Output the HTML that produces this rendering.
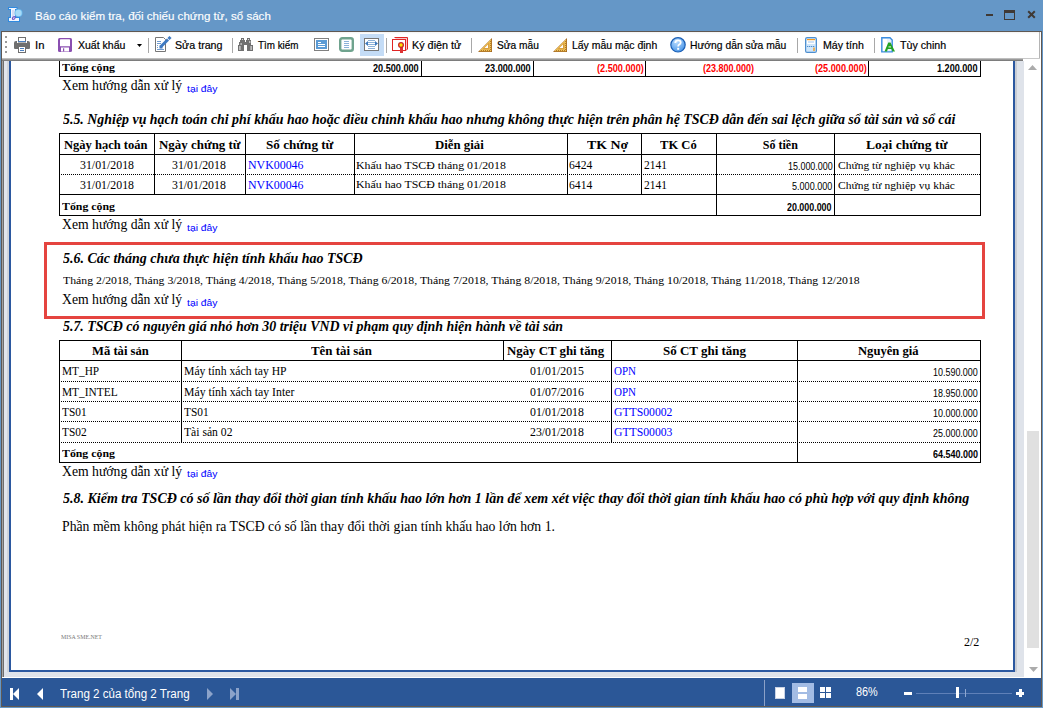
<!DOCTYPE html>
<html><head><meta charset="utf-8">
<style>
*{margin:0;padding:0;box-sizing:border-box}
html,body{width:1043px;height:708px;overflow:hidden;background:#6597c7;position:relative;font-family:"Liberation Sans",sans-serif}
.a{position:absolute}
.t{position:absolute;white-space:nowrap;transform-origin:0 0}
.hl{position:absolute;height:1px;background:#000}
.vl{position:absolute;width:1px;background:#000}
.dl{position:absolute;height:1px;background:repeating-linear-gradient(90deg,#000 0 1px,transparent 1px 2px)}
.sep{position:absolute;width:1px;height:15px;top:38px;background:#a8a8a8}
</style></head><body>
<!-- window frame -->
<div class="a" style="left:1px;top:31px;width:1041px;height:676px;background:#5f5853"></div>
<div class="a" style="left:2px;top:32px;width:1039px;height:674px;background:#fff"></div>
<!-- toolbar -->
<div class="a" style="left:2px;top:32px;width:1038px;height:26px;background:linear-gradient(#f2f2f2 0,#fff 2px,#fff 100%)"></div>
<div class="a" style="left:1039px;top:32px;width:1px;height:27px;background:#b4b4b4"></div>
<div class="a" style="left:2px;top:58px;width:1021px;height:3px;background:linear-gradient(#d0d0d0,#9a9a9a 50%,#6e6e6e)"></div>
<!-- grip dots -->
<div class="a" style="left:5px;top:36px;width:2px;height:2px;background:#999"></div>
<div class="a" style="left:5px;top:41px;width:2px;height:2px;background:#999"></div>
<div class="a" style="left:5px;top:46px;width:2px;height:2px;background:#999"></div>
<div class="a" style="left:5px;top:51px;width:2px;height:2px;background:#999"></div>
<!-- separators -->
<div class="sep" style="left:148px"></div>
<div class="sep" style="left:232px"></div>
<div class="sep" style="left:386px"></div>
<div class="sep" style="left:471px"></div>
<div class="sep" style="left:797px"></div>
<div class="sep" style="left:874px"></div>
<!-- highlighted button -->
<div class="a" style="left:360px;top:34px;width:24px;height:22px;background:#c4dcf6"></div>

<!-- page area -->
<div class="a" style="left:2px;top:61px;width:1px;height:617px;background:#a2a2a2"></div>
<div class="a" style="left:3px;top:61px;width:1px;height:617px;background:#6e6e6e"></div>
<div class="a" style="left:4px;top:61px;width:1020px;height:616px;background:#dfe3ea"></div>
<div class="a" style="left:4px;top:61px;width:3px;height:611px;background:#e2e6ed"></div>
<div class="a" style="left:7px;top:61px;width:2px;height:611px;background:#d0d4da"></div>
<div class="a" style="left:1015px;top:61px;width:2px;height:611px;background:#c9cdd4"></div>
<div class="a" style="left:9px;top:61px;width:1006px;height:611px;background:#2b58a0"></div>
<div class="a" style="left:11px;top:61px;width:1002px;height:609px;background:#fff"></div>
<!-- scrollbar -->
<div class="a" style="left:1024px;top:59px;width:17px;height:619px;background:#fff"></div>
<div class="a" style="left:1023px;top:58px;width:17px;height:1px;background:#c9c9c9"></div>
<div class="a" style="left:1027px;top:431px;width:12px;height:217px;background:#e0e0e0"></div>
<svg class="a" style="left:1028px;top:65px" width="9" height="5"><polygon points="0,5 4.5,0 9,5" fill="#ababab"/></svg>
<svg class="a" style="left:1029px;top:667px" width="9" height="5"><polygon points="0,0 4.5,5 9,0" fill="#ababab"/></svg>
<!-- status bar -->
<div class="a" style="left:2px;top:677px;width:1022px;height:1px;background:#fff"></div>
<div class="a" style="left:2px;top:678px;width:1039px;height:28px;background:#2b5797"></div>
<div class="a" style="left:1px;top:706px;width:1041px;height:1px;background:#5f5853"></div>

<!-- report tables -->
<!-- top table total row -->
<div class="vl" style="left:59px;top:61px;height:16px"></div>
<div class="vl" style="left:421px;top:61px;height:16px"></div>
<div class="vl" style="left:533px;top:61px;height:16px"></div>
<div class="vl" style="left:645px;top:61px;height:16px"></div>
<div class="vl" style="left:868px;top:61px;height:16px"></div>
<div class="vl" style="left:980px;top:61px;height:16px"></div>
<div class="hl" style="left:59px;top:76px;width:922px"></div>

<!-- 5.5 table -->
<div class="hl" style="left:59px;top:133px;width:922px"></div>
<div class="hl" style="left:59px;top:154px;width:922px"></div>
<div class="dl" style="left:59px;top:174px;width:922px"></div>
<div class="hl" style="left:59px;top:194px;width:922px"></div>
<div class="hl" style="left:59px;top:215px;width:922px"></div>
<div class="vl" style="left:59px;top:133px;height:83px"></div>
<div class="vl" style="left:980px;top:133px;height:83px"></div>
<div class="vl" style="left:154px;top:133px;height:62px"></div>
<div class="vl" style="left:245px;top:133px;height:62px"></div>
<div class="vl" style="left:354px;top:133px;height:62px"></div>
<div class="vl" style="left:567px;top:133px;height:62px"></div>
<div class="vl" style="left:641px;top:133px;height:62px"></div>
<div class="vl" style="left:716px;top:133px;height:83px"></div>
<div class="vl" style="left:834px;top:133px;height:83px"></div>

<!-- red box -->
<div class="a" style="left:44px;top:242px;width:941px;height:77px;border:3px solid #e5443f"></div>

<!-- 5.7 table -->
<div class="hl" style="left:59px;top:340px;width:922px"></div>
<div class="hl" style="left:59px;top:360px;width:922px"></div>
<div class="dl" style="left:59px;top:381px;width:922px"></div>
<div class="dl" style="left:59px;top:401px;width:922px"></div>
<div class="dl" style="left:59px;top:421px;width:922px"></div>
<div class="dl" style="left:59px;top:442px;width:922px"></div>
<div class="hl" style="left:59px;top:462px;width:922px"></div>
<div class="vl" style="left:59px;top:340px;height:123px"></div>
<div class="vl" style="left:980px;top:340px;height:123px"></div>
<div class="vl" style="left:181px;top:340px;height:102px"></div>
<div class="vl" style="left:503px;top:340px;height:20px"></div>
<div class="vl" style="left:611px;top:340px;height:102px"></div>
<div class="vl" style="left:797px;top:340px;height:123px"></div>

<!-- title icon -->
<svg class="a" style="left:7px;top:6px" width="17" height="17" viewBox="0 0 17 17">
<path d="M1 1 H10.5 V4 H9 V11 H13 V15.9 H1 V11 H3 V4 H1 Z" fill="#2f8ae0"/>
<path d="M2 2 H9.5 V3 H8 V12 H12 V14.9 H2 V12 H4 V3 H2 Z" fill="#f2f6ff"/>
<rect x="5" y="4" width="2.5" height="8" fill="#d4dcf4"/>
<circle cx="11.5" cy="7" r="4" fill="#67b6ec"/>
<circle cx="11.5" cy="7" r="3.2" fill="#a6dbf8"/>
<ellipse cx="6.8" cy="12" rx="1.6" ry="1.1" transform="rotate(-40 6.8 12)" fill="none" stroke="#7050c8" stroke-width="1.1"/>
</svg>
<!-- window controls -->
<div class="a" style="left:986px;top:14px;width:7px;height:2px;background:#3f3935"></div>
<div class="a" style="left:1004px;top:10px;width:11px;height:10px;border:1px solid #3f3935;border-top-width:3px"></div>
<svg class="a" style="left:1027px;top:10px" width="9" height="9" viewBox="0 0 9 9"><path d="M1.2 1.2 L7.8 7.8 M7.8 1.2 L1.2 7.8" stroke="#3f3935" stroke-width="2"/></svg>

<!-- printer -->
<svg class="a" style="left:14px;top:37px" width="16" height="16" viewBox="0 0 16 16">
<rect x="4.5" y="0.5" width="7" height="4.5" fill="#fff" stroke="#6f6f6f"/>
<rect x="4" y="4" width="8" height="1" fill="#4a7fc0"/>
<path d="M0 6 Q0 4 2 4 L3 4 L3 6 L13 6 L13 4 L14 4 Q16 4 16 6 L16 11 Q16 12 15 12 L1 12 Q0 12 0 11 Z" fill="#6f6f6f"/>
<rect x="4.5" y="9.5" width="7" height="6" fill="#fff" stroke="#6f6f6f"/>
<rect x="6" y="11" width="4" height="1" fill="#4a7fc0"/>
<rect x="6" y="13" width="4" height="1" fill="#4a7fc0"/>
</svg>
<!-- save -->
<svg class="a" style="left:58px;top:38px" width="14" height="14" viewBox="0 0 14 14">
<rect x="0" y="0" width="14" height="14" rx="1.5" fill="#8a4fb1"/>
<rect x="2" y="1.2" width="10" height="7" rx="0.5" fill="#fff"/>
<rect x="3" y="9.5" width="8" height="4" fill="#fff"/>
<rect x="5" y="10.3" width="1.2" height="3.2" fill="#8a4fb1"/>
</svg>
<svg class="a" style="left:137px;top:44px" width="5" height="3" viewBox="0 0 5 3"><polygon points="0,0 5,0 2.5,3" fill="#000"/></svg>
<!-- edit page -->
<svg class="a" style="left:154px;top:36px" width="18" height="17" viewBox="0 0 18 17">
<path d="M1.5 1.5 L9.5 1.5 L11.5 3.5 L11.5 15.5 L1.5 15.5 Z" fill="#fff" stroke="#767676"/>
<rect x="3" y="5" width="4" height="1" fill="#6f9bd0"/>
<rect x="3" y="7" width="4" height="1" fill="#6f9bd0"/>
<rect x="3" y="13" width="7" height="1" fill="#6f9bd0"/>
<rect x="3" y="9" width="1" height="1" fill="#6f9bd0"/>
<rect x="3" y="11" width="1" height="1" fill="#6f9bd0"/>
<path d="M6.5 11 L14 3.5" stroke="#3f7ac2" stroke-width="3"/>
<path d="M14.5 3 L16.5 1" stroke="#3f7ac2" stroke-width="3"/>
<rect x="5.5" y="9.5" width="3" height="3" fill="#3f7ac2"/>
</svg>
<!-- binoculars -->
<svg class="a" style="left:238px;top:38px" width="15" height="13" viewBox="0 0 15 13">
<path d="M3 0 H6 V2 H7 V4 H8 V2 H9 V0 H12 V2 H13 V7 H15 V13 H9 V7 H6 V13 H0 V7 H1 V4 H2 V2 H3 Z" fill="#707070"/>
<rect x="1.3" y="8" width="1.2" height="4" fill="#ddd"/>
<rect x="12.5" y="8" width="1.2" height="4" fill="#ddd"/>
<rect x="2.6" y="5" width="1" height="2" fill="#ddd"/>
<rect x="11.3" y="3" width="1" height="2" fill="#ddd"/>
<rect x="4" y="1" width="1" height="1" fill="#ddd"/>
<rect x="10" y="1" width="1" height="1" fill="#ddd"/>
</svg>
<!-- page view icons -->
<svg class="a" style="left:314px;top:38px" width="15" height="13" viewBox="0 0 15 13">
<rect x="0.5" y="0.5" width="14" height="12" fill="#fff" stroke="#808080"/>
<rect x="2" y="2" width="11" height="9" fill="#5b9bd5"/>
<rect x="4" y="4" width="3" height="1" fill="#fff"/>
<rect x="4" y="6" width="7" height="1" fill="#fff"/>
<rect x="4" y="8" width="7" height="1" fill="#fff"/>
</svg>
<svg class="a" style="left:339px;top:37px" width="15" height="15" viewBox="0 0 15 15">
<rect x="1.2" y="1.2" width="12.6" height="12.6" rx="2" fill="#fff" stroke="#6fa38e" stroke-width="2.4"/>
<rect x="5" y="4" width="5" height="1" fill="#8db2d9"/>
<rect x="5" y="6" width="5" height="1" fill="#8db2d9"/>
<rect x="5" y="8" width="5" height="1" fill="#8db2d9"/>
<rect x="5" y="10" width="5" height="1" fill="#8db2d9"/>
</svg>
<svg class="a" style="left:364px;top:38px" width="15" height="13" viewBox="0 0 15 13">
<rect x="0.5" y="0.5" width="14" height="12" fill="#fff" stroke="#767676"/>
<rect x="4" y="2" width="7" height="1" fill="#8db2d9"/>
<rect x="4" y="4" width="7" height="1" fill="#8db2d9"/>
<rect x="4" y="6" width="7" height="1" fill="#8db2d9"/>
<rect x="4" y="8" width="7" height="1" fill="#8db2d9"/>
<rect x="4" y="10" width="7" height="1" fill="#8db2d9"/>
<polygon points="1,5.5 4,3 4,8" fill="#3d79bd"/>
<polygon points="14,5.5 11,3 11,8" fill="#3d79bd"/>
</svg>
<!-- ky dien tu -->
<svg class="a" style="left:391px;top:37px" width="18" height="17" viewBox="0 0 18 17">
<path d="M3.5 0.5 H16.5 V12 L15 13.5" fill="#f6c8c8" stroke="#e02424"/>
<rect x="1.5" y="2.5" width="13" height="11" fill="#fff" stroke="#e02424"/>
<rect x="9" y="10" width="3" height="6" fill="#d33"/>
<circle cx="10" cy="8" r="3" fill="#c9282a"/>
<circle cx="10" cy="8" r="1.7" fill="#ffe000"/>
</svg>
<!-- rulers -->
<svg class="a" style="left:478px;top:38px" width="14" height="14" viewBox="0 0 14 14">
<polygon points="0,14 14,0 14,14" fill="#a0631c"/>
<polygon points="1.2,13.2 13.2,1.2 13.2,13.2" fill="#f3c75a"/>
<polygon points="4,11.5 11.5,4 11.5,11.5" fill="#d9a040"/>
<polygon points="6.5,10 10,6.5 10,10" fill="#fff"/><rect x="3" y="12" width="1" height="1" fill="#b07a2a"/><rect x="5" y="12" width="1" height="1" fill="#b07a2a"/><rect x="7" y="12" width="1" height="1" fill="#b07a2a"/><rect x="9" y="12" width="1" height="1" fill="#b07a2a"/><rect x="11" y="12" width="1" height="1" fill="#b07a2a"/><rect x="12" y="3" width="1" height="1" fill="#b07a2a"/><rect x="12" y="5" width="1" height="1" fill="#b07a2a"/><rect x="12" y="7" width="1" height="1" fill="#b07a2a"/><rect x="12" y="9" width="1" height="1" fill="#b07a2a"/><rect x="12" y="11" width="1" height="1" fill="#b07a2a"/>
</svg>
<svg class="a" style="left:553px;top:38px" width="14" height="14" viewBox="0 0 14 14">
<polygon points="0,14 14,0 14,14" fill="#a0631c"/>
<polygon points="1.2,13.2 13.2,1.2 13.2,13.2" fill="#f3c75a"/>
<polygon points="4,11.5 11.5,4 11.5,11.5" fill="#d9a040"/>
<polygon points="6.5,10 10,6.5 10,10" fill="#fff"/><rect x="3" y="12" width="1" height="1" fill="#b07a2a"/><rect x="5" y="12" width="1" height="1" fill="#b07a2a"/><rect x="7" y="12" width="1" height="1" fill="#b07a2a"/><rect x="9" y="12" width="1" height="1" fill="#b07a2a"/><rect x="11" y="12" width="1" height="1" fill="#b07a2a"/><rect x="12" y="3" width="1" height="1" fill="#b07a2a"/><rect x="12" y="5" width="1" height="1" fill="#b07a2a"/><rect x="12" y="7" width="1" height="1" fill="#b07a2a"/><rect x="12" y="9" width="1" height="1" fill="#b07a2a"/><rect x="12" y="11" width="1" height="1" fill="#b07a2a"/>
</svg>
<!-- help -->
<svg class="a" style="left:670px;top:37px" width="16" height="16" viewBox="0 0 16 16">
<defs><radialGradient id="hg" cx="0.4" cy="0.3" r="0.8"><stop offset="0" stop-color="#b9dcff"/><stop offset="1" stop-color="#3d8ee6"/></radialGradient></defs>
<circle cx="8" cy="7.8" r="7.2" fill="url(#hg)" stroke="#1b5fb5" stroke-width="1.2"/>
<path d="M5.3 6 Q5.3 3.3 8 3.3 Q10.7 3.3 10.7 5.6 Q10.7 7 9 7.8 Q8.2 8.3 8.2 9.5" fill="none" stroke="#fff" stroke-width="1.8"/>
<rect x="7.2" y="10.8" width="2" height="2" fill="#fff"/>
</svg>
<!-- calculator -->
<svg class="a" style="left:805px;top:37px" width="12" height="16" viewBox="0 0 12 16">
<rect x="0.6" y="0.6" width="10.8" height="14.8" rx="1.5" fill="#cfe6fb" stroke="#4f8fcf" stroke-width="1.2"/>
<rect x="2" y="2" width="8" height="5" fill="#fff"/>
<rect x="2" y="2" width="8" height="1.2" fill="#f39a1e"/>
<rect x="3" y="4" width="6" height="2" fill="#cfe2f7"/>
<rect x="2" y="9" width="1.3" height="1" fill="#4f8fcf"/>
<rect x="4" y="9" width="1.3" height="1" fill="#4f8fcf"/>
<rect x="6" y="9" width="1.3" height="1" fill="#4f8fcf"/>
<rect x="8" y="9" width="1.3" height="1" fill="#4f8fcf"/>
<rect x="8.3" y="10.5" width="1.4" height="3.5" fill="#f39a1e"/>
</svg>
<!-- tuy chinh -->
<svg class="a" style="left:881px;top:37px" width="16" height="16" viewBox="0 0 16 16">
<path d="M0.8 0.8 H9 L11.2 3 V14.9 H0.8 Z" fill="#e8f2fc" stroke="#3b8de0" stroke-width="1.4"/>
<rect x="2" y="2" width="4" height="12" fill="#fff"/>
<path d="M3.5 14.5 L7.3 5.5 H9.5 L14 14.5 H11.5 L10.5 12 H6.8 L6 14.5 Z" fill="#23a323"/>
<rect x="7.5" y="9.3" width="2.5" height="1.2" fill="#cfe9c9"/>
</svg>

<!-- status bar icons -->
<svg class="a" style="left:9px;top:688px" width="11" height="12" viewBox="0 0 11 12"><rect x="1" y="0" width="3" height="12" fill="#fff"/><polygon points="4,6 10,0 10,12" fill="#fff"/></svg>
<svg class="a" style="left:36px;top:688px" width="8" height="12" viewBox="0 0 8 12"><polygon points="1,6 7,0 7,12" fill="#fff"/></svg>
<svg class="a" style="left:206px;top:688px" width="8" height="12" viewBox="0 0 8 12"><polygon points="1,0 7,6 1,12" fill="#8ca3ca"/></svg>
<svg class="a" style="left:229px;top:688px" width="11" height="12" viewBox="0 0 11 12"><polygon points="1,0 7,6 1,12" fill="#8ca3ca"/><rect x="7" y="0" width="3" height="12" fill="#8ca3ca"/></svg>
<div class="a" style="left:764px;top:680px;width:1px;height:26px;background:#8ba1c8"></div>
<div class="a" style="left:775px;top:687px;width:10px;height:12px;background:#fff;border:1px solid #c9d3e6"></div>
<div class="a" style="left:792px;top:683px;width:22px;height:20px;background:#a3bce4"></div>
<div class="a" style="left:798px;top:687px;width:9px;height:5px;background:#fff"></div>
<div class="a" style="left:798px;top:694px;width:9px;height:5px;background:#fff"></div>
<div class="a" style="left:820px;top:687px;width:5px;height:5px;background:#fff"></div>
<div class="a" style="left:826px;top:687px;width:5px;height:5px;background:#fff"></div>
<div class="a" style="left:820px;top:693px;width:5px;height:5px;background:#fff"></div>
<div class="a" style="left:826px;top:693px;width:5px;height:5px;background:#fff"></div>
<!-- zoom slider -->
<div class="a" style="left:904px;top:692px;width:8px;height:3px;background:#fff"></div>
<div class="a" style="left:916px;top:693px;width:96px;height:1px;background:#5f80b8"></div>
<div class="a" style="left:956px;top:687px;width:3px;height:11px;background:#fff"></div>
<div class="a" style="left:965px;top:689px;width:1px;height:8px;background:#8ea7d0"></div>
<div class="a" style="left:1016px;top:692px;width:8px;height:3px;background:#fff"></div>
<div class="a" style="left:1018.5px;top:689px;width:3px;height:8px;background:#fff"></div>

<div class="t" id="t0" style="left:35.2px;top:8.92px;font:normal normal 11.5px/14px 'Liberation Sans', sans-serif;color:#fff;transform:scaleX(1.0049);-webkit-text-stroke:0.15px #fff;">Báo cáo kiểm tra, đối chiếu chứng từ, sổ sách</div>
<div class="t" id="t1" style="left:34.5px;top:39.29px;font:normal normal 11px/13px 'Liberation Sans', sans-serif;color:#000;transform:scaleX(1.0231);-webkit-text-stroke:0.2px #000;">In</div>
<div class="t" id="t2" style="left:77.7px;top:39.29px;font:normal normal 11px/13px 'Liberation Sans', sans-serif;color:#000;transform:scaleX(0.9567);-webkit-text-stroke:0.2px #000;">Xuất khẩu</div>
<div class="t" id="t3" style="left:174.5px;top:39.29px;font:normal normal 11px/13px 'Liberation Sans', sans-serif;color:#000;transform:scaleX(0.9703);-webkit-text-stroke:0.2px #000;">Sửa trang</div>
<div class="t" id="t4" style="left:257.7px;top:39.29px;font:normal normal 11px/13px 'Liberation Sans', sans-serif;color:#000;transform:scaleX(0.8953);-webkit-text-stroke:0.2px #000;">Tìm kiếm</div>
<div class="t" id="t5" style="left:412.3px;top:39.29px;font:normal normal 11px/13px 'Liberation Sans', sans-serif;color:#000;transform:scaleX(0.9826);-webkit-text-stroke:0.2px #000;">Ký điện tử</div>
<div class="t" id="t6" style="left:497.2px;top:39.29px;font:normal normal 11px/13px 'Liberation Sans', sans-serif;color:#000;transform:scaleX(0.9253);-webkit-text-stroke:0.2px #000;">Sửa mẫu</div>
<div class="t" id="t7" style="left:571.7px;top:39.29px;font:normal normal 11px/13px 'Liberation Sans', sans-serif;color:#000;transform:scaleX(0.9478);-webkit-text-stroke:0.2px #000;">Lấy mẫu mặc định</div>
<div class="t" id="t8" style="left:690.2px;top:39.29px;font:normal normal 11px/13px 'Liberation Sans', sans-serif;color:#000;transform:scaleX(0.9379);-webkit-text-stroke:0.2px #000;">Hướng dẫn sửa mẫu</div>
<div class="t" id="t9" style="left:823.4px;top:39.29px;font:normal normal 11px/13px 'Liberation Sans', sans-serif;color:#000;transform:scaleX(0.9671);-webkit-text-stroke:0.2px #000;">Máy tính</div>
<div class="t" id="t10" style="left:900.1px;top:39.29px;font:normal normal 11px/13px 'Liberation Sans', sans-serif;color:#000;transform:scaleX(0.9664);-webkit-text-stroke:0.2px #000;">Tùy chinh</div>
<div class="t" id="t11" style="left:60.4px;top:686.64px;font:normal normal 12px/14px 'Liberation Sans', sans-serif;color:#fff;transform:scaleX(0.9649);">Trang 2 của tổng 2 Trang</div>
<div class="t" id="t12" style="left:856.0px;top:685.34px;font:normal normal 12px/14px 'Liberation Sans', sans-serif;color:#fff;transform:scaleX(0.9072);">86%</div>
<div class="t" id="t13" style="left:62.0px;top:60.59px;font:normal bold 11px/13px 'Liberation Serif', serif;color:#000;transform:scaleX(1.0768);">Tổng cộng</div>
<div class="t" id="t14" style="left:373.1px;top:63.44px;font:normal bold 10px/12px 'Liberation Sans', sans-serif;color:#000;transform:scaleX(0.9129);">20.500.000</div>
<div class="t" id="t15" style="left:484.8px;top:63.44px;font:normal bold 10px/12px 'Liberation Sans', sans-serif;color:#000;transform:scaleX(0.9129);">23.000.000</div>
<div class="t" id="t16" style="left:596.9px;top:63.44px;font:normal bold 10px/12px 'Liberation Sans', sans-serif;color:#f00;transform:scaleX(0.9148);">(2.500.000)</div>
<div class="t" id="t17" style="left:703.4px;top:63.44px;font:normal bold 10px/12px 'Liberation Sans', sans-serif;color:#f00;transform:scaleX(0.8992);">(23.800.000)</div>
<div class="t" id="t18" style="left:814.8px;top:63.44px;font:normal bold 10px/12px 'Liberation Sans', sans-serif;color:#f00;transform:scaleX(0.9133);">(25.000.000)</div>
<div class="t" id="t19" style="left:937.1px;top:63.44px;font:normal bold 10px/12px 'Liberation Sans', sans-serif;color:#000;transform:scaleX(0.9101);">1.200.000</div>
<div class="t" id="t20" style="left:62.0px;top:77.11px;font:normal normal 14.5px/17px 'Liberation Serif', serif;color:#000;transform:scaleX(0.9442);">Xem hướng dẫn xử lý</div>
<div class="t" id="t21" style="left:187.4px;top:82.61px;font:normal normal 9.5px/11px 'Liberation Sans', sans-serif;color:#00f;transform:scaleX(1.0893);">tại đây</div>
<div class="t" id="t22" style="left:62.7px;top:110.04px;font:italic bold 15px/18px 'Liberation Serif', serif;color:#000;transform:scaleX(0.9266);">5.5. Nghiệp vụ hạch toán chi phí khấu hao hoặc điều chỉnh khấu hao nhưng không thực hiện trên phân hệ TSCĐ dẫn đến sai lệch giữa sổ tài sản và sổ cái</div>
<div class="t" id="t23" style="left:64.1px;top:137.75px;font:normal bold 12px/14px 'Liberation Serif', serif;color:#000;transform:scaleX(1.0435);">Ngày hạch toán</div>
<div class="t" id="t24" style="left:158.7px;top:137.75px;font:normal bold 12px/14px 'Liberation Serif', serif;color:#000;transform:scaleX(1.0772);">Ngày chứng từ</div>
<div class="t" id="t25" style="left:266.0px;top:137.75px;font:normal bold 12px/14px 'Liberation Serif', serif;color:#000;transform:scaleX(1.0931);">Số chứng từ</div>
<div class="t" id="t26" style="left:435.0px;top:137.75px;font:normal bold 12px/14px 'Liberation Serif', serif;color:#000;transform:scaleX(1.0685);">Diễn giải</div>
<div class="t" id="t27" style="left:586.8px;top:137.75px;font:normal bold 12px/14px 'Liberation Serif', serif;color:#000;transform:scaleX(1.1555);">TK Nợ</div>
<div class="t" id="t28" style="left:660.2px;top:137.75px;font:normal bold 12px/14px 'Liberation Serif', serif;color:#000;transform:scaleX(1.0481);">TK Có</div>
<div class="t" id="t29" style="left:762.8px;top:137.75px;font:normal bold 12px/14px 'Liberation Serif', serif;color:#000;">Số tiền</div>
<div class="t" id="t30" style="left:865.9px;top:137.75px;font:normal bold 12px/14px 'Liberation Serif', serif;color:#000;transform:scaleX(1.1267);">Loại chứng từ</div>
<div class="t" id="t31" style="left:80.2px;top:158.02px;font:normal normal 11.5px/14px 'Liberation Serif', serif;color:#000;transform:scaleX(1.0307);">31/01/2018</div>
<div class="t" id="t32" style="left:172.4px;top:158.02px;font:normal normal 11.5px/14px 'Liberation Serif', serif;color:#000;transform:scaleX(1.0269);">31/01/2018</div>
<div class="t" id="t33" style="left:248.1px;top:158.02px;font:normal normal 11.5px/14px 'Liberation Serif', serif;color:#00f;transform:scaleX(1.0341);">NVK00046</div>
<div class="t" id="t34" style="left:355.7px;top:158.69px;font:normal normal 11px/13px 'Liberation Serif', serif;color:#000;transform:scaleX(1.0774);">Khấu hao TSCĐ tháng 01/2018</div>
<div class="t" id="t35" style="left:569.3px;top:158.02px;font:normal normal 11.5px/14px 'Liberation Serif', serif;color:#000;transform:scaleX(1.0130);">6424</div>
<div class="t" id="t36" style="left:644.0px;top:158.02px;font:normal normal 11.5px/14px 'Liberation Serif', serif;color:#000;">2141</div>
<div class="t" id="t37" style="left:787.8px;top:161.44px;font:normal normal 10px/12px 'Liberation Sans', sans-serif;color:#000;transform:scaleX(0.8929);">15.000.000</div>
<div class="t" id="t38" style="left:837.7px;top:159.26px;font:normal normal 10.5px/13px 'Liberation Serif', serif;color:#000;transform:scaleX(1.0981);">Chứng từ nghiệp vụ khác</div>
<div class="t" id="t39" style="left:80.2px;top:177.72px;font:normal normal 11.5px/14px 'Liberation Serif', serif;color:#000;transform:scaleX(1.0307);">31/01/2018</div>
<div class="t" id="t40" style="left:172.4px;top:177.72px;font:normal normal 11.5px/14px 'Liberation Serif', serif;color:#000;transform:scaleX(1.0269);">31/01/2018</div>
<div class="t" id="t41" style="left:248.1px;top:177.72px;font:normal normal 11.5px/14px 'Liberation Serif', serif;color:#00f;transform:scaleX(1.0341);">NVK00046</div>
<div class="t" id="t42" style="left:355.7px;top:178.39px;font:normal normal 11px/13px 'Liberation Serif', serif;color:#000;transform:scaleX(1.0774);">Khấu hao TSCĐ tháng 01/2018</div>
<div class="t" id="t43" style="left:569.3px;top:177.72px;font:normal normal 11.5px/14px 'Liberation Serif', serif;color:#000;transform:scaleX(1.0130);">6414</div>
<div class="t" id="t44" style="left:644.0px;top:177.72px;font:normal normal 11.5px/14px 'Liberation Serif', serif;color:#000;">2141</div>
<div class="t" id="t45" style="left:792.2px;top:181.13px;font:normal normal 10px/12px 'Liberation Sans', sans-serif;color:#000;transform:scaleX(0.9056);">5.000.000</div>
<div class="t" id="t46" style="left:837.7px;top:178.96px;font:normal normal 10.5px/13px 'Liberation Serif', serif;color:#000;transform:scaleX(1.0981);">Chứng từ nghiệp vụ khác</div>
<div class="t" id="t47" style="left:62.0px;top:200.39px;font:normal bold 11px/13px 'Liberation Serif', serif;color:#000;transform:scaleX(1.0768);">Tổng cộng</div>
<div class="t" id="t48" style="left:786.8px;top:202.13px;font:normal bold 10px/12px 'Liberation Sans', sans-serif;color:#000;transform:scaleX(0.8889);">20.000.000</div>
<div class="t" id="t49" style="left:62.0px;top:216.41px;font:normal normal 14.5px/17px 'Liberation Serif', serif;color:#000;transform:scaleX(0.9442);">Xem hướng dẫn xử lý</div>
<div class="t" id="t50" style="left:187.4px;top:221.91px;font:normal normal 9.5px/11px 'Liberation Sans', sans-serif;color:#00f;transform:scaleX(1.0893);">tại đây</div>
<div class="t" id="t51" style="left:62.7px;top:249.04px;font:italic bold 15px/18px 'Liberation Serif', serif;color:#000;transform:scaleX(0.9310);">5.6. Các tháng chưa thực hiện tính khấu hao TSCĐ</div>
<div class="t" id="t52" style="left:62.5px;top:273.76px;font:normal normal 10.5px/13px 'Liberation Serif', serif;color:#000;transform:scaleX(1.1209);">Tháng 2/2018, Tháng 3/2018, Tháng 4/2018, Tháng 5/2018, Tháng 6/2018, Tháng 7/2018, Tháng 8/2018, Tháng 9/2018, Tháng 10/2018, Tháng 11/2018, Tháng 12/2018</div>
<div class="t" id="t53" style="left:62.0px;top:291.01px;font:normal normal 14.5px/17px 'Liberation Serif', serif;color:#000;transform:scaleX(0.9442);">Xem hướng dẫn xử lý</div>
<div class="t" id="t54" style="left:187.4px;top:296.51px;font:normal normal 9.5px/11px 'Liberation Sans', sans-serif;color:#00f;transform:scaleX(1.0893);">tại đây</div>
<div class="t" id="t55" style="left:62.7px;top:316.94px;font:italic bold 15px/18px 'Liberation Serif', serif;color:#000;transform:scaleX(0.9264);">5.7. TSCĐ có nguyên giá nhỏ hơn 30 triệu VND vi phạm quy định hiện hành về tài sản</div>
<div class="t" id="t56" style="left:92.2px;top:344.25px;font:normal bold 12px/14px 'Liberation Serif', serif;color:#000;transform:scaleX(1.0519);">Mã tài sản</div>
<div class="t" id="t57" style="left:311.0px;top:344.25px;font:normal bold 12px/14px 'Liberation Serif', serif;color:#000;transform:scaleX(1.0761);">Tên tài sản</div>
<div class="t" id="t58" style="left:506.8px;top:344.25px;font:normal bold 12px/14px 'Liberation Serif', serif;color:#000;transform:scaleX(1.0694);">Ngày CT ghi tăng</div>
<div class="t" id="t59" style="left:663.0px;top:344.25px;font:normal bold 12px/14px 'Liberation Serif', serif;color:#000;transform:scaleX(1.0806);">Số CT ghi tăng</div>
<div class="t" id="t60" style="left:858.4px;top:344.25px;font:normal bold 12px/14px 'Liberation Serif', serif;color:#000;transform:scaleX(1.0505);">Nguyên giá</div>
<div class="t" id="t61" style="left:62.2px;top:363.95px;font:normal normal 12px/14px 'Liberation Serif', serif;color:#000;transform:scaleX(0.9430);">MT_HP</div>
<div class="t" id="t62" style="left:184.4px;top:364.12px;font:normal normal 11.5px/14px 'Liberation Serif', serif;color:#000;transform:scaleX(1.0165);">Máy tính xách tay HP</div>
<div class="t" id="t63" style="left:530.3px;top:364.12px;font:normal normal 11.5px/14px 'Liberation Serif', serif;color:#000;transform:scaleX(1.0288);">01/01/2015</div>
<div class="t" id="t64" style="left:614.2px;top:364.12px;font:normal normal 11.5px/14px 'Liberation Serif', serif;color:#00f;transform:scaleX(0.9559);">OPN</div>
<div class="t" id="t65" style="left:933.2px;top:367.34px;font:normal normal 10px/12px 'Liberation Sans', sans-serif;color:#000;transform:scaleX(0.8949);">10.590.000</div>
<div class="t" id="t66" style="left:62.2px;top:384.55px;font:normal normal 12px/14px 'Liberation Serif', serif;color:#000;transform:scaleX(0.9479);">MT_INTEL</div>
<div class="t" id="t67" style="left:184.4px;top:384.72px;font:normal normal 11.5px/14px 'Liberation Serif', serif;color:#000;transform:scaleX(1.0219);">Máy tính xách tay Inter</div>
<div class="t" id="t68" style="left:530.3px;top:384.72px;font:normal normal 11.5px/14px 'Liberation Serif', serif;color:#000;transform:scaleX(1.0288);">01/07/2016</div>
<div class="t" id="t69" style="left:614.2px;top:384.72px;font:normal normal 11.5px/14px 'Liberation Serif', serif;color:#00f;transform:scaleX(0.9559);">OPN</div>
<div class="t" id="t70" style="left:933.2px;top:387.94px;font:normal normal 10px/12px 'Liberation Sans', sans-serif;color:#000;transform:scaleX(0.8949);">18.950.000</div>
<div class="t" id="t71" style="left:62.2px;top:404.85px;font:normal normal 12px/14px 'Liberation Serif', serif;color:#000;transform:scaleX(0.9494);">TS01</div>
<div class="t" id="t72" style="left:184.4px;top:405.02px;font:normal normal 11.5px/14px 'Liberation Serif', serif;color:#000;transform:scaleX(0.9911);">TS01</div>
<div class="t" id="t73" style="left:530.3px;top:405.02px;font:normal normal 11.5px/14px 'Liberation Serif', serif;color:#000;transform:scaleX(1.0288);">01/01/2018</div>
<div class="t" id="t74" style="left:614.2px;top:405.02px;font:normal normal 11.5px/14px 'Liberation Serif', serif;color:#00f;transform:scaleX(1.0157);">GTTS00002</div>
<div class="t" id="t75" style="left:933.2px;top:408.24px;font:normal normal 10px/12px 'Liberation Sans', sans-serif;color:#000;transform:scaleX(0.8949);">10.000.000</div>
<div class="t" id="t76" style="left:62.2px;top:424.65px;font:normal normal 12px/14px 'Liberation Serif', serif;color:#000;transform:scaleX(0.9494);">TS02</div>
<div class="t" id="t77" style="left:184.4px;top:424.82px;font:normal normal 11.5px/14px 'Liberation Serif', serif;color:#000;transform:scaleX(1.0124);">Tài sản 02</div>
<div class="t" id="t78" style="left:530.3px;top:424.82px;font:normal normal 11.5px/14px 'Liberation Serif', serif;color:#000;transform:scaleX(1.0288);">23/01/2018</div>
<div class="t" id="t79" style="left:614.2px;top:424.82px;font:normal normal 11.5px/14px 'Liberation Serif', serif;color:#00f;transform:scaleX(1.0157);">GTTS00003</div>
<div class="t" id="t80" style="left:933.2px;top:428.04px;font:normal normal 10px/12px 'Liberation Sans', sans-serif;color:#000;transform:scaleX(0.8949);">25.000.000</div>
<div class="t" id="t81" style="left:62.0px;top:446.59px;font:normal bold 11px/13px 'Liberation Serif', serif;color:#000;transform:scaleX(1.0748);">Tổng cộng</div>
<div class="t" id="t82" style="left:933.0px;top:449.14px;font:normal bold 10px/12px 'Liberation Sans', sans-serif;color:#000;transform:scaleX(0.8989);">64.540.000</div>
<div class="t" id="t83" style="left:62.0px;top:462.91px;font:normal normal 14.5px/17px 'Liberation Serif', serif;color:#000;transform:scaleX(0.9442);">Xem hướng dẫn xử lý</div>
<div class="t" id="t84" style="left:187.4px;top:468.41px;font:normal normal 9.5px/11px 'Liberation Sans', sans-serif;color:#00f;transform:scaleX(1.0893);">tại đây</div>
<div class="t" id="t85" style="left:62.7px;top:489.34px;font:italic bold 15px/18px 'Liberation Serif', serif;color:#000;transform:scaleX(0.9322);">5.8. Kiểm tra TSCĐ có số lần thay đổi thời gian tính khấu hao lớn hơn 1 lần để xem xét việc thay đổi thời gian tính khấu hao có phù hợp với quy định không</div>
<div class="t" id="t86" style="left:62.0px;top:517.81px;font:normal normal 14.5px/17px 'Liberation Serif', serif;color:#000;transform:scaleX(0.9471);">Phần mềm không phát hiện ra TSCĐ có số lần thay đổi thời gian tính khấu hao lớn hơn 1.</div>
<div class="t" id="t87" style="left:60.9px;top:634.44px;font:normal normal 5.5px/7px 'Liberation Serif', serif;color:#777;transform:scaleX(1.0706);">MISA SME.NET</div>
<div class="t" id="t88" style="left:963.8px;top:634.04px;font:normal normal 13.5px/16px 'Liberation Serif', serif;color:#000;transform:scaleX(0.8919);">2/2</div>
</body></html>
